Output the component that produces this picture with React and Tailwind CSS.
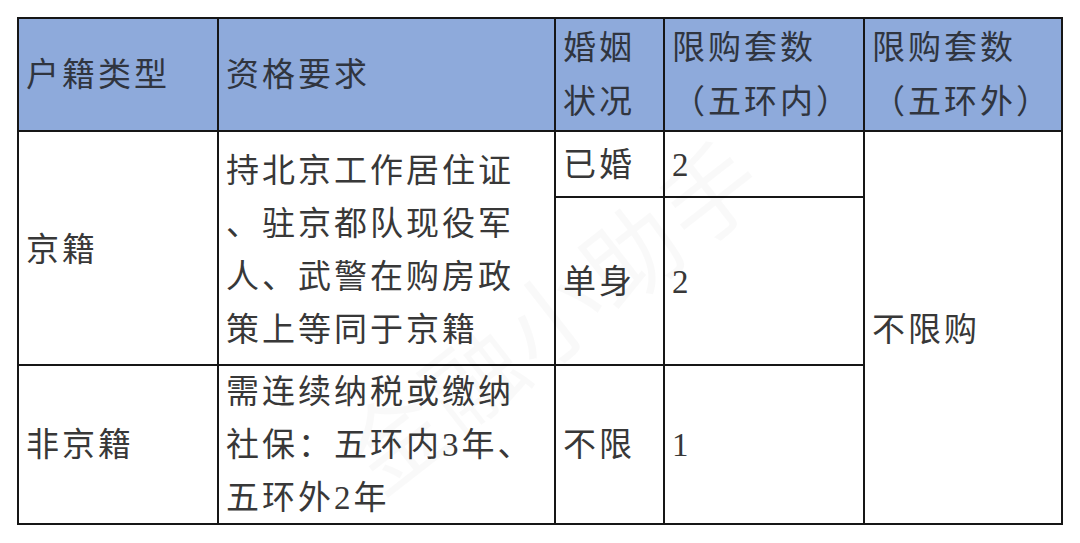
import React from "react";

const font = {
  fontFamily: '"Liberation Serif", "Noto Sans CJK SC", serif',
};

const Head = ({ lines }) => (
  <div className="bg-[#8eaadb] flex items-center pl-[7px] text-[#30353f] text-[33px] tracking-[3px] leading-[54px]">
    <div>
      {lines.map((l) => (
        <div key={l} className="whitespace-nowrap">
          {l}
        </div>
      ))}
    </div>
  </div>
);

const Cell = ({ lines, className = "" }) => (
  <div
    className={`bg-white flex items-center pl-[7px] text-[#383838] text-[33px] tracking-[3px] leading-[53px] ${className}`}
  >
    <div>
      {lines.map((l) => (
        <div key={l} className="whitespace-nowrap">
          {l}
        </div>
      ))}
    </div>
  </div>
);

export default function App() {
  return (
    <div className="w-[1080px] h-[543px] bg-white overflow-hidden" style={font}>
      <div className="relative ml-[17px] mt-[17px] w-[1046px]">
        <div className="grid grid-cols-[198px_335px_107px_198px_196px] grid-rows-[111px_64px_166px_157px] gap-[2px] p-[2px] bg-[#161616]">
          <Head lines={["户籍类型"]} />
          <Head lines={["资格要求"]} />
          <Head lines={["婚姻", "状况"]} />
          <Head lines={["限购套数", "（五环内）"]} />
          <Head lines={["限购套数", "（五环外）"]} />

          <Cell lines={["京籍"]} className="row-span-2 pt-[4px]" />
          <Cell
            lines={[
              "持北京工作居住证",
              "、驻京都队现役军",
              "人、武警在购房政",
              "策上等同于京籍",
            ]}
            className="row-span-2 pl-[5px] pt-[6px]"
          />
          <Cell lines={["已婚"]} className="pt-[2px]" />
          <Cell lines={["2"]} className="pl-[5px] pt-[2px]" />
          <Cell lines={["不限购"]} className="row-span-3 pt-[6px]" />
          <Cell lines={["单身"]} className="pt-[2px]" />
          <Cell lines={["2"]} className="pl-[5px] pt-[2px]" />

          <Cell lines={["非京籍"]} className="pt-[2px]" />
          <Cell
            lines={["需连续纳税或缴纳", "社保：五环内3年、", "五环外2年"]}
            className="pl-[5px] pt-[2px]"
          />
          <Cell lines={["不限"]} className="pt-[2px]" />
          <Cell lines={["1"]} className="pl-[5px] pt-[2px]" />
        </div>

        {/* faint watermark */}
        <div className="pointer-events-none absolute left-[290px] top-[230px] -rotate-[38deg] text-[96px] tracking-[4px] text-black/[0.025] whitespace-nowrap">
          金融小助手
        </div>
      </div>
    </div>
  );
}
